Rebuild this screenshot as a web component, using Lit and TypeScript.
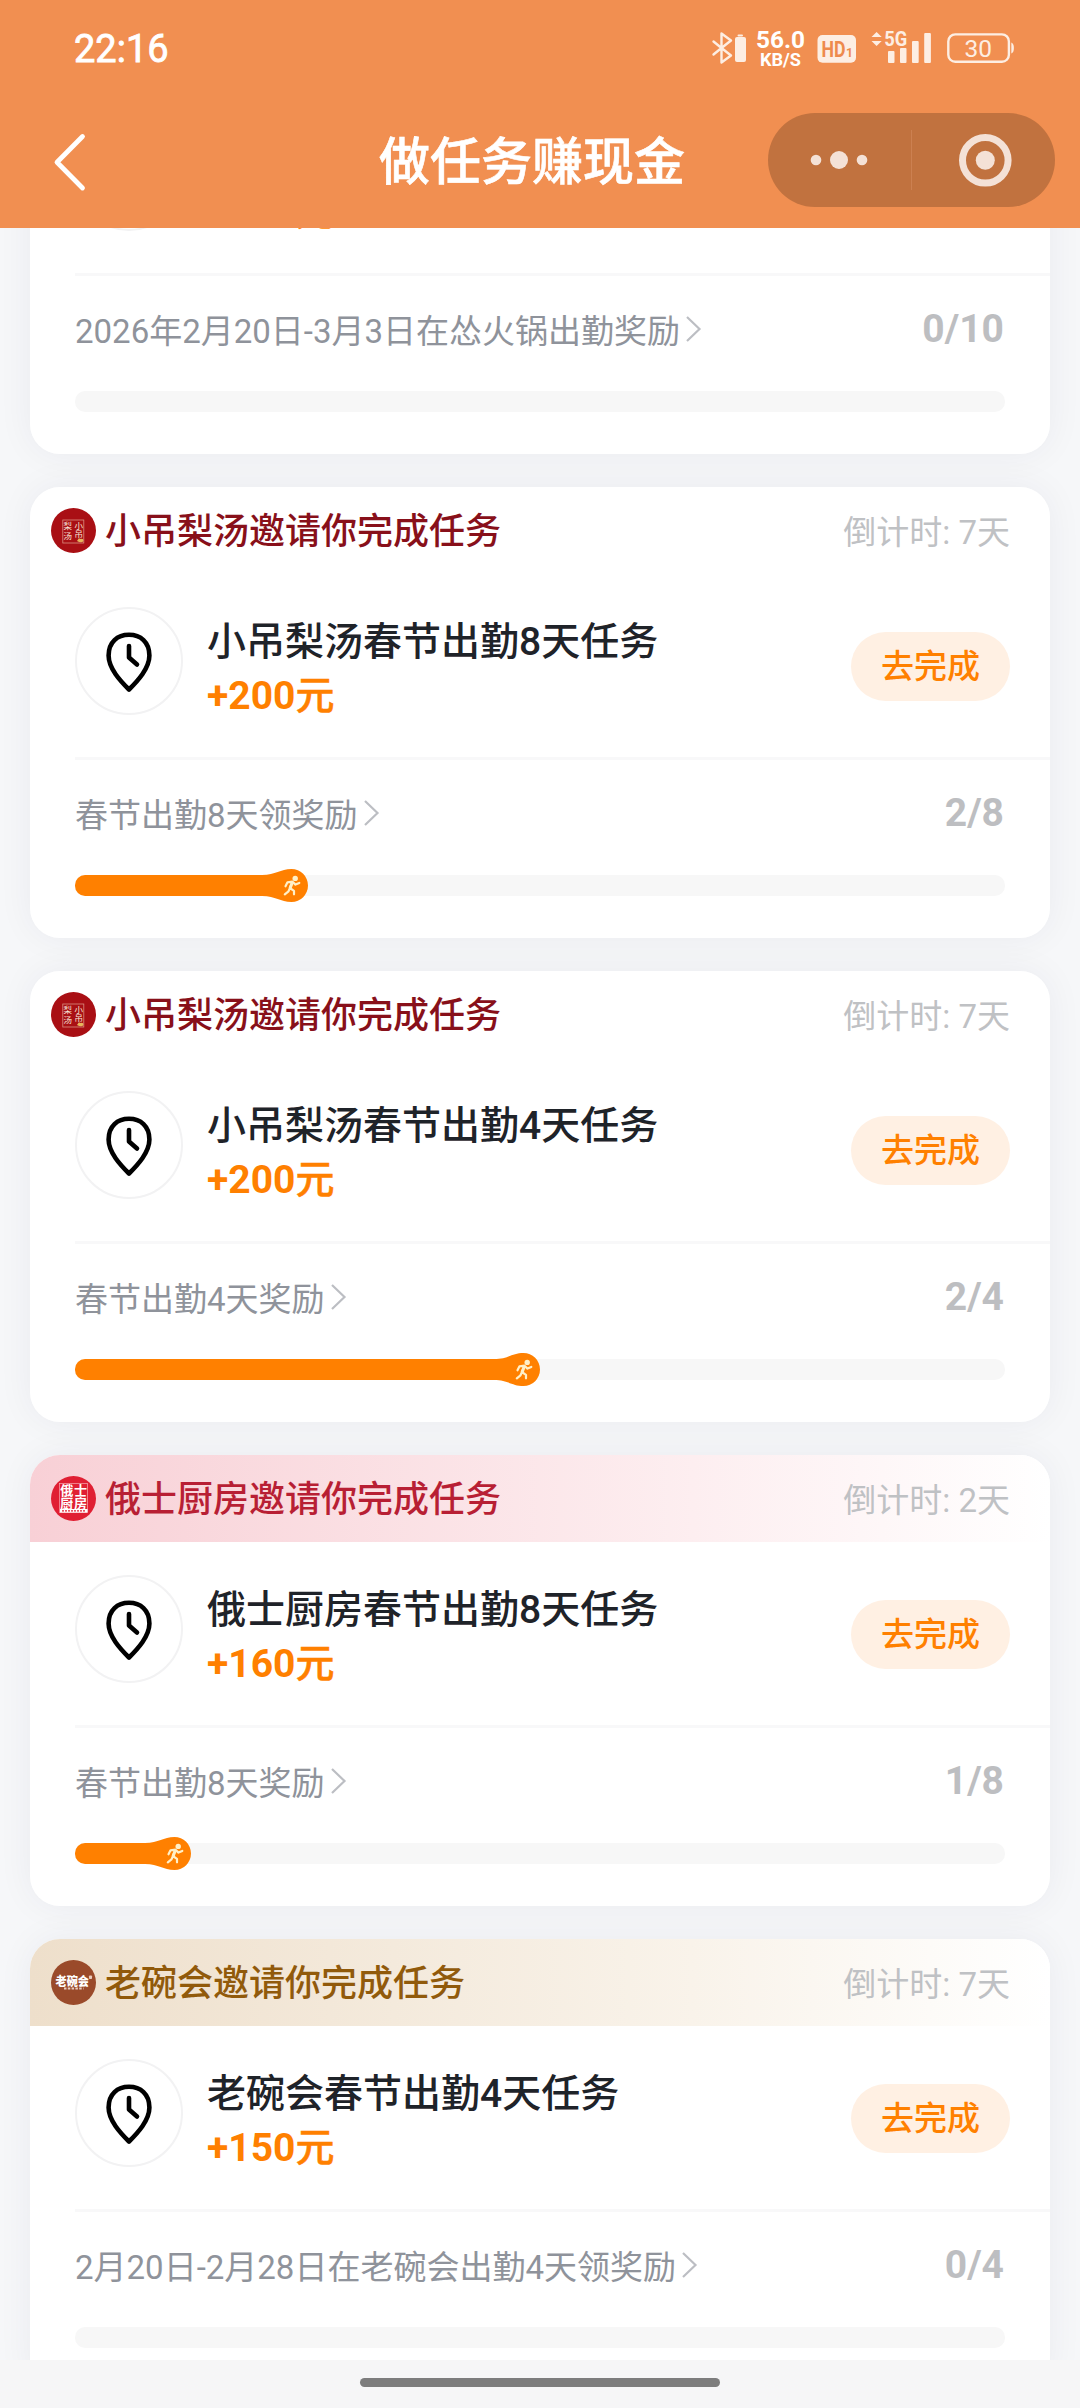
import { LitElement, html, svg, css, nothing } from "lit";
import { customElement, property } from "lit/decorators.js";

type Brand = "plain" | "pear" | "kitchen" | "bowl";

interface Task {
  brand: Brand;
  inviter: string;
  countdown: string;
  title: string;
  reward: string;
  rule: string;
  done: number;
  total: number;
}

const TASKS: Task[] = [
  { brand: "plain", inviter: "", countdown: "", title: "", reward: "+200元", rule: "2026年2月20日-3月3日在怂火锅出勤奖励", done: 0, total: 10 },
  { brand: "pear", inviter: "小吊梨汤邀请你完成任务", countdown: "7天", title: "小吊梨汤春节出勤8天任务", reward: "+200元", rule: "春节出勤8天领奖励", done: 2, total: 8 },
  { brand: "pear", inviter: "小吊梨汤邀请你完成任务", countdown: "7天", title: "小吊梨汤春节出勤4天任务", reward: "+200元", rule: "春节出勤4天奖励", done: 2, total: 4 },
  { brand: "kitchen", inviter: "俄士厨房邀请你完成任务", countdown: "2天", title: "俄士厨房春节出勤8天任务", reward: "+160元", rule: "春节出勤8天奖励", done: 1, total: 8 },
  { brand: "bowl", inviter: "老碗会邀请你完成任务", countdown: "7天", title: "老碗会春节出勤4天任务", reward: "+150元", rule: "2月20日-2月28日在老碗会出勤4天领奖励", done: 0, total: 4 },
];

@customElement("status-bar")
export class StatusBar extends LitElement {
  static styles = css`
    :host { display: flex; justify-content: space-between; height: 94px; padding: 0 66px 0 74px; color: #fff; }
    .time { font-size: 38px; line-height: 40px; font-weight: 400; -webkit-text-stroke: 0.8px #fff; padding-top: 29px; }
    .icons { display: flex; padding-top: 28px; }
    svg { display: block; height: 42px; overflow: visible; fill: #fdeee3; font-family: Roboto, sans-serif; }
    .bt { width: 42px; }
    .speed { width: 54px; margin-right: 6px; fill: #fff; }
    .hd { width: 48px; margin-right: 5px; }
    .signal { width: 70px; margin-right: 9px; }
    .battery { width: 70px; }
    .stroke { fill: none; stroke: #fdeee3; stroke-width: 2.4; stroke-linejoin: round; stroke-linecap: round; }
    .cut { fill: #ee8a4c; }
    .b { font-weight: 700; }
    .m { font-weight: 500; }
  `;
  render() {
    return html`
      <span class="time">22:16</span>
      <div class="icons">
        <svg class="bt" viewBox="710 28 42 42">
          <path class="stroke" d="M713.5 41.500 L721.500 48 L731 55.500 L721.500 62.500 V33.500 L731 40.500 L721.500 48 L713.500 54.500" />
          <rect x="735" y="37" width="11" height="25" rx="2" />
          <rect x="737.5" y="34.5" width="5.5" height="2" rx="1" />
        </svg>
        <svg class="speed" viewBox="752 28 54 42">
          <text class="b" x="756" y="48.3" font-size="24" textLength="49" lengthAdjust="spacingAndGlyphs">56.0</text>
          <text class="b" x="760" y="65.8" font-size="18.5" textLength="41" lengthAdjust="spacingAndGlyphs">KB/S</text>
        </svg>
        <svg class="hd" viewBox="812 28 48 42">
          <rect x="817.5" y="35" width="38.5" height="27.7" rx="5" />
          <text class="cut b" x="821.5" y="57" font-size="22.5" textLength="24" lengthAdjust="spacingAndGlyphs">HD</text>
          <text class="cut b" x="846" y="57" font-size="13.5" textLength="7" lengthAdjust="spacingAndGlyphs">1</text>
        </svg>
        <svg class="signal" viewBox="865 28 70 42">
          <path d="M871.5 37 L876.6 32 L881.7 37 Z M871.5 41 L876.6 46 L881.7 41 Z" />
          <text class="b" x="884.3" y="46" font-size="20" textLength="23" lengthAdjust="spacingAndGlyphs">5G</text>
          <rect x="888" y="51" width="6.5" height="12" rx="1" />
          <rect x="900" y="48" width="6.5" height="15" rx="1" />
          <rect x="912" y="41" width="6.7" height="22" rx="1" />
          <rect x="924.2" y="33" width="6.7" height="30" rx="1" />
        </svg>
        <svg class="battery" viewBox="944 28 70 42">
          <rect class="stroke" x="948.3" y="34.4" width="60.6" height="27.4" rx="7" />
          <path d="M1011.3 42.5 q2.6 1 2.6 5.5 t-2.6 5.5 Z" />
          <text x="964.5" y="57" font-size="24" textLength="27.5" lengthAdjust="spacingAndGlyphs">30</text>
        </svg>
      </div>
    `;
  }
}

@customElement("nav-bar")
export class NavBar extends LitElement {
  static styles = css`
    :host { display: grid; grid-template-columns: 379px 1fr 287px 25px; align-items: center; height: 134px; box-sizing: border-box; padding-bottom: 2px; }
    .back { display: block; width: 36px; height: 60px; margin: 3px 0 0 52px; fill: none; stroke: #fff; stroke-width: 4.8; stroke-linecap: round; stroke-linejoin: round; }
    .title { color: #fff; font-size: 51px; line-height: 60px; padding-top: 5px; font-weight: 500; -webkit-text-stroke: 0.6px #fff; white-space: nowrap; }
    .capsule { display: flex; align-items: center; height: 94px; border-radius: 47px; background: #c1723f; }
    .capsule svg { display: block; width: 143px; height: 94px; fill: #f4e1d6; }
    .split { width: 1px; height: 60px; background: #cc8051; }
    .capsule .ring { fill: none; stroke: #f4e1d6; stroke-width: 7; }
  `;
  render() {
    return html`
      <svg class="back" viewBox="0 0 36 60"><path d="M30.5 4.5 L5 30.2 L30.5 56" /></svg>
      <span class="title">做任务赚现金</span>
      <div class="capsule">
        <svg viewBox="0 0 143 94">
          <circle cx="48" cy="47" r="5.3" /><circle cx="71" cy="47" r="9" /><circle cx="94" cy="47" r="5.3" />
        </svg>
        <span class="split"></span>
        <svg viewBox="0 0 143 94">
          <circle class="ring" cx="73.3" cy="47.3" r="22.8" /><circle cx="73.3" cy="47.3" r="9.5" />
        </svg>
      </div>
    `;
  }
}

const LOGOS = {
  plain: nothing,
  pear: svg`
    <circle cx="22.5" cy="22.5" r="22.5" fill="#a90f14" />
    <rect x="11.8" y="12" width="21" height="23" fill="none" stroke="#d98f80" stroke-width=".8" />
    <g fill="#f7e3d6" font-size="8.5">
      <text x="23.5" y="20.5">小</text><text x="23.5" y="29">吊</text>
      <text x="12.6" y="21">梨</text><text x="12.6" y="31">汤</text>
    </g>
    <path d="M26 33 q2 -3.5 3.5 -2 q3 -1 3 2 q-2 2.5 -6.5 0Z" fill="#e6b65c" />`,
  kitchen: svg`
    <circle cx="22.5" cy="22.5" r="22.5" fill="#e01f33" />
    <rect x="8.5" y="7.5" width="28" height="29" fill="none" stroke="#f7a9b0" stroke-width=".7" />
    <g fill="#fff" font-weight="700" font-size="13">
      <text x="9.3" y="19">俄</text><text x="23" y="19">士</text>
      <text x="9.3" y="31.5">厨</text><text x="23" y="31.5">房</text>
    </g>
    <rect x="9" y="33" width="27.5" height="3.6" fill="#fff" />
    <path d="M11 34.8 H34.5" stroke="#e01f33" stroke-width="1.2" stroke-dasharray="2 1" />`,
  bowl: svg`
    <circle cx="22.5" cy="22.5" r="22.5" fill="#9a4a2a" />
    <text x="4.5" y="25.8" fill="#fff" font-weight="900" font-size="12" textLength="33.5" lengthAdjust="spacingAndGlyphs">老碗会</text>
    <rect x="38" y="15.5" width="3" height="3.5" rx=".8" fill="#e9cdbf" />
    <path d="M13 28.6 H32.5" stroke="#e9cdbf" stroke-width="2" stroke-dasharray="2.5 1.3" />`,
};

@customElement("task-card")
export class TaskCard extends LitElement {
  @property({ attribute: false }) task!: Task;

  static styles = css`
    :host { display: block; height: 451px; }
    .card { display: flex; flex-direction: column; height: 451px; border-radius: 30px; overflow: hidden; background: #fff; }
    .head { display: flex; align-items: center; box-sizing: border-box; height: 87px; padding: 0 40px 1px 21px; }
    .kitchen { background: linear-gradient(90deg, #f8d0d6, #fdeef0 65%, #fff); color: #b81f34; }
    .bowl { background: linear-gradient(90deg, #eedfcb, #f9f3ea 65%, #fff); color: #915a0b; }
    .pear { color: #88101a; }
    .logo { display: block; width: 45px; height: 45px; margin-right: 9px; font-family: "Noto Sans CJK SC", sans-serif; }
    .inviter { flex: 1; font-size: 36px; line-height: 48px; padding-top: 4px; font-weight: 500; white-space: nowrap; }
    .countdown { font-size: 33px; line-height: 44px; color: #bfc1c4; white-space: nowrap; padding-top: 5px; }
    .body { display: flex; align-items: flex-start; box-sizing: border-box; height: 183px; padding: 33px 39px 0 45px; }
    .pin { display: grid; place-items: center; box-sizing: border-box; width: 108px; height: 108px; border: 2px solid #f2f2f3; border-radius: 50%; margin-right: 24px; }
    .pin svg { display: block; width: 50px; height: 64px; margin-top: 1px; fill: none; stroke: #000; stroke-width: 4.6; stroke-linejoin: round; stroke-linecap: round; }
    .info { display: flex; flex-direction: column; flex: 1; font-size: 39px; line-height: 55px; padding-top: 8px; }
    .title { height: 54px; color: #1f2329; font-weight: 500; white-space: nowrap; }
    .reward { height: 55px; color: #ff8000; font-weight: 700; }
    .unit { font-weight: 500; -webkit-text-stroke: 0.5px #ff8000; }
    .go { width: 159px; height: 69px; margin: 25px 1px 0 -1px; padding: 0; border: 0; border-radius: 35px; background: #fff0e3; color: #ff8000; font: 500 33px/68px Roboto, "Noto Sans CJK SC", sans-serif; }
    .foot { margin-left: 45px; border-top: 3px solid #f8f8f9; padding: 32px 45px 0 0; }
    .line { display: flex; align-items: flex-start; height: 48px; }
    .rule { font-size: 33px; line-height: 48px; color: #8f939b; white-space: nowrap; }
    .more { display: block; width: 20px; height: 30px; margin: 6px 0 0 3px; fill: none; stroke: #bcbec3; stroke-width: 2.2; }
    .count { margin: -3px 1px 0 auto; font-size: 39px; line-height: 48px; font-weight: 700; color: #bdbec1; }
    .track { display: flex; height: 21px; margin-top: 35px; border-radius: 10px; background: #f7f7f7; }
    .fill { display: flex; justify-content: flex-end; align-items: center; }
    .done { flex: 1; align-self: stretch; margin-right: -20px; border-radius: 10px 0 0 10px; background: #ff8000; }
    .runner { display: block; flex: none; width: 46px; height: 33px; }
  `;

  render() {
    const t = this.task;
    return html`
      <article class="card">
        <header class="head ${t.brand}">
          ${t.inviter
            ? html`
                <svg class="logo" viewBox="0 0 45 45">${LOGOS[t.brand]}</svg>
                <span class="inviter">${t.inviter}</span>
                <span class="countdown">倒计时: ${t.countdown}</span>
              `
            : nothing}
        </header>
        <section class="body">
          <div class="pin">
            <svg viewBox="0 0 50 64">
              <path d="M25 59.5 C16.5 51 4.6 38.5 4.6 25.5 C4.6 12 13.5 4.8 25 4.8 C36.5 4.8 45.4 12 45.4 25.5 C45.4 38.5 33.5 51 25 59.5 Z" />
              <path d="M25 16 V27.5 L33 34.5" />
            </svg>
          </div>
          <div class="info">
            <span class="title">${t.title}</span>
            <span class="reward">${t.reward.slice(0, -1)}<span class="unit">${t.reward.slice(-1)}</span></span>
          </div>
          <button class="go">去完成</button>
        </section>
        <footer class="foot">
          <div class="line">
            <span class="rule">${t.rule}</span>
            <svg class="more" viewBox="0 0 20 30"><path d="M4 3 L16.5 15 L4 27" /></svg>
            <span class="count">${t.done}/${t.total}</span>
          </div>
          <div class="track">
            ${t.done
              ? html`<div class="fill" style="width:${(t.done / t.total) * 100}%">
                  <span class="done"></span>
                  <svg class="runner" viewBox="0 0 46 33">
                    <path fill="#ff8000" d="M0 6 C14 6 18 0 29.5 0 A16.5 16.5 0 0 1 29.5 33 C18 33 14 27 0 27 Z" />
                    <circle cx="33.2" cy="9.4" r="2.7" fill="#fff0c8" />
                    <path fill="none" stroke="#fff0c8" stroke-width="2.2" stroke-linecap="round" stroke-linejoin="round"
                      d="M23.5 17.3 L25.5 13.3 L30.5 12.7 L33.5 15.6 L37.3 14 M30.3 13.5 L27.8 19 L32 21.8 L32 25.3 M28 19 L26.5 22.3 L22.8 25.3" />
                    <path fill="none" stroke="#fff0c8" stroke-width="3" stroke-linecap="round" d="M30.2 13.8 L28.3 18.6" />
                  </svg>
                </div>`
              : nothing}
          </div>
        </footer>
      </article>
    `;
  }
}

@customElement("app-root")
export class AppRoot extends LitElement {
  static styles = css`
    :host { display: flex; flex-direction: column; width: 1080px; height: 2408px; overflow: hidden; background: #f6f7f9; font-family: Roboto, "Noto Sans CJK SC", sans-serif; }
    .top { flex: none; height: 228px; background: #f18f51; }
    .scroll { flex: 1; min-height: 0; overflow: hidden; }
    .list { display: flex; flex-direction: column; gap: 33px; margin-top: -225px; padding: 0 30px; }
    .item { border-radius: 30px; box-shadow: 0 0 36px rgba(30, 40, 80, 0.055); }
    .home { flex: none; display: flex; justify-content: center; height: 30px; padding-top: 18px; background: #f6f6f7; }
    .pill { width: 360px; height: 9px; border-radius: 5px; background: #7d7d7d; }
  `;
  render() {
    return html`
      <div class="top"><status-bar></status-bar><nav-bar></nav-bar></div>
      <main class="scroll">
        <div class="list">${TASKS.map((t) => html`<task-card class="item" .task=${t}></task-card>`)}</div>
      </main>
      <div class="home"><div class="pill"></div></div>
    `;
  }
}
